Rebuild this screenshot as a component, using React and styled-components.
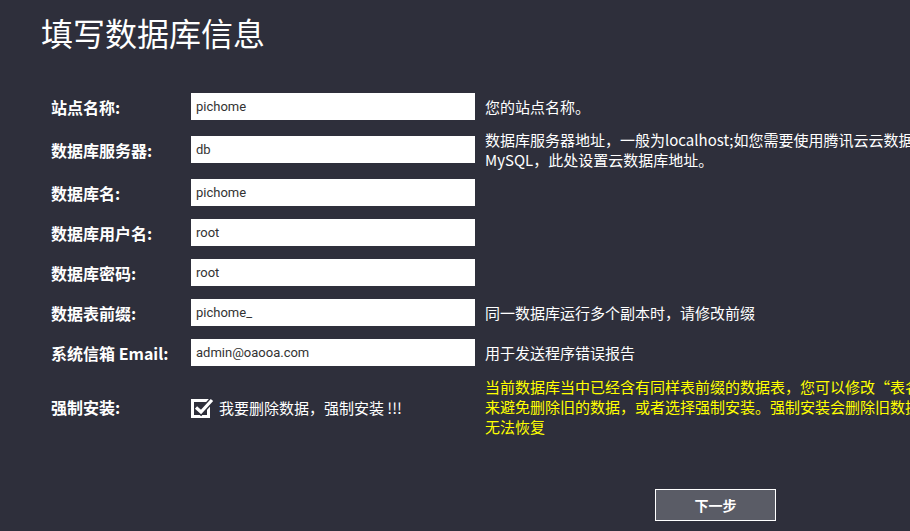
import React from "react";
import styled, { createGlobalStyle } from "styled-components";

const GlobalStyle = createGlobalStyle`
  html, body {
    margin: 0;
    padding: 0;
    background: #2e2f3b;
    overflow: hidden;
  }
  body {
    font-family: "Noto Sans CJK SC", "Liberation Sans", sans-serif;
    color: #fff;
  }
`;

const Page = styled.div`
  width: 1200px;
  min-height: 100vh;
  padding: 8px 0 0 41px;
  box-sizing: border-box;
`;

const Title = styled.h1`
  margin: 0;
  font-size: 32px;
  font-weight: 400;
  line-height: 48px;
  color: #fff;
`;

const Form = styled.div`
  margin-top: 37px;
  padding-left: 10px;
`;

const Row = styled.div`
  display: flex;
  align-items: center;
  height: ${({ h }) => h || 27}px;
  margin-bottom: ${({ gap }) => gap || 0}px;
`;

const Label = styled.div`
  flex: none;
  width: 140px;
  font-size: 16px;
  font-weight: 700;
  color: #fff;
  white-space: nowrap;
`;

const Input = styled.input`
  flex: none;
  width: 284px;
  height: 27px;
  box-sizing: border-box;
  border: none;
  outline: none;
  padding: 0 5px;
  background: #fff;
  color: #333;
  font-family: Roboto, "Liberation Sans", sans-serif;
  font-size: 13px;
`;

const Help = styled.div`
  flex: none;
  margin-left: 10px;
  font-size: 15px;
  line-height: 20px;
  white-space: nowrap;
  color: ${({ warn }) => (warn ? "#ffff00" : "#fff")};
`;

const CheckField = styled.label`
  flex: none;
  width: 284px;
  display: flex;
  align-items: center;
  gap: 4px;
  font-size: 15px;
  color: #fff;
  white-space: nowrap;
`;

const Footer = styled.div`
  margin-top: 52px;
  padding-left: 614px;
`;

const NextButton = styled.button`
  width: 121px;
  height: 32px;
  background: #5a5c66;
  border: 1px solid #fff;
  color: #fff;
  font-family: "Noto Sans CJK SC", "Liberation Sans", sans-serif;
  font-size: 14px;
  font-weight: 700;
  cursor: pointer;
`;

const CheckIcon = () => (
  <svg width="24" height="24" viewBox="0 0 24 24">
    <rect x="1.5" y="5.5" width="16" height="16" fill="none" stroke="#fff" strokeWidth="3" />
    <path d="M5 12.5 L10 17 L21 5" fill="none" stroke="#2e2f3b" strokeWidth="6" />
    <path d="M5 12.5 L10 17 L21 5" fill="none" stroke="#fff" strokeWidth="3.2" />
  </svg>
);

const fields = [
  { label: "站点名称:", value: "pichome", help: ["您的站点名称。"], gap: 16 },
  {
    label: "数据库服务器:",
    value: "db",
    help: [
      "数据库服务器地址，一般为localhost;如您需要使用腾讯云云数据库",
      "MySQL，此处设置云数据库地址。",
    ],
    gap: 16,
  },
  { label: "数据库名:", value: "pichome", help: [], gap: 13 },
  { label: "数据库用户名:", value: "root", help: [], gap: 13 },
  { label: "数据库密码:", value: "root", help: [], gap: 13 },
  { label: "数据表前缀:", value: "pichome_", help: ["同一数据库运行多个副本时，请修改前缀"], gap: 13 },
  { label: "系统信箱 Email:", value: "admin@oaooa.com", help: ["用于发送程序错误报告"], gap: 11 },
];

const warning = [
  "当前数据库当中已经含有同样表前缀的数据表，您可以修改“表名前缀”",
  "来避免删除旧的数据，或者选择强制安装。强制安装会删除旧数据，且",
  "无法恢复",
];

export default function App() {
  return (
    <Page>
      <GlobalStyle />
      <Title>填写数据库信息</Title>
      <Form>
        {fields.map((f) => (
          <Row key={f.label} gap={f.gap}>
            <Label>{f.label}</Label>
            <Input defaultValue={f.value} />
            <Help>
              {f.help.map((line, i) => (
                <div key={i}>{line}</div>
              ))}
            </Help>
          </Row>
        ))}
        <Row h={60}>
          <Label>强制安装:</Label>
          <CheckField>
            <CheckIcon />
            我要删除数据，强制安装 !!!
          </CheckField>
          <Help warn>
            {warning.map((line, i) => (
              <div key={i}>{line}</div>
            ))}
          </Help>
        </Row>
      </Form>
      <Footer>
        <NextButton>下一步</NextButton>
      </Footer>
    </Page>
  );
}
